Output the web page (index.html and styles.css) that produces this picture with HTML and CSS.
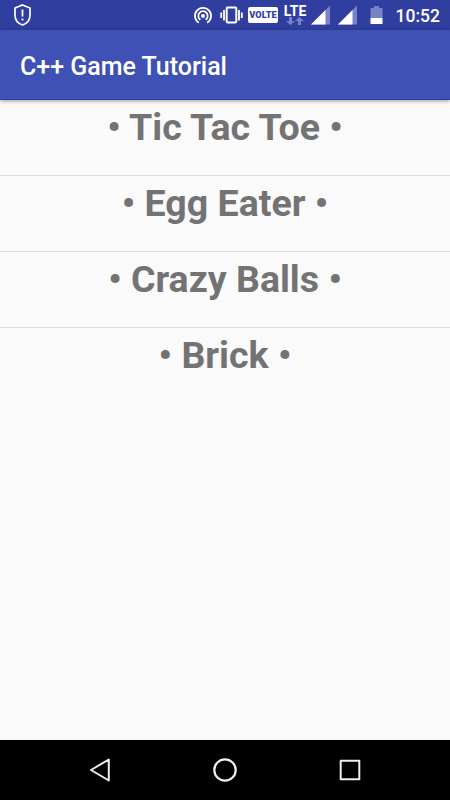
FILE: index.html
```html
<!DOCTYPE html>
<html lang="en">
<head>
<meta charset="utf-8">
<title>C++ Game Tutorial</title>
<link rel="stylesheet" href="styles.css">
</head>
<body>
<div class="screen">
  <div class="status-bar">
    <svg class="shield" width="18" height="30" viewBox="0 0 18 30" fill="none" stroke="#fff" stroke-width="1.7"><path d="M8.500 5L16 8V15C16 19.500 13 23.500 8.500 25C4 23.500 1 19.500 1 15V8Z"/><path d="M8.500 9.500V16.500M8.500 18.500V20.500" stroke-width="1.800"/></svg>
    <div class="indicators">
      <svg width="20" height="30" viewBox="0 0 20 30" fill="none" stroke="#fff" stroke-width="1.800"><path d="M5.800 22.700A8 8 0 1 1 14.200 22.700"/><path d="M7.400 19.800A4.700 4.700 0 1 1 12.600 19.800"/><circle cx="10" cy="16" r="2" fill="#fff" stroke="none"/></svg>
      <svg class="vibrate" width="24" height="30" viewBox="0 0 24 30" fill="none" stroke="#fff"><rect x="6.700" y="7.400" width="9.600" height="15" rx=".8" stroke-width="2"/><path d="M4 10V20.500M19 10V20.500M1.200 12.500V18M21.800 12.500V18" stroke-width="1.800"/></svg>
      <span class="volte">VOLTE</span>
      <div class="network">
        <span class="lte">LTE</span>
        <svg width="18" height="8" viewBox="0 0 18 8" fill="#7982c4"><path d="M3 0H6V4H9L4.500 8L0 4H3Z"/><path d="M12 8H15V4H18L13.500 0L9 4H12Z"/></svg>
      </div>
      <svg class="signal" width="19" height="30" viewBox="0 0 19 30"><path d="M0 24.500L19 5.500V24.500Z" fill="#7982c4"/><path d="M0 24.500L14.500 10V24.500Z" fill="#fff"/></svg>
      <svg class="signal second" width="19" height="30" viewBox="0 0 19 30"><path d="M0 24.500L19 5.500V24.500Z" fill="#7982c4"/><path d="M0 24.500L14.500 10V24.500Z" fill="#fff"/></svg>
      <svg class="battery" width="13" height="30" viewBox="0 0 13 30"><path d="M0.500 18V8H4V6H9V8H12.500V18Z" fill="#7982c4"/><path d="M.5 18H12.500V24H.5Z" fill="#fff"/></svg>
      <span class="clock">10:52</span>
    </div>
  </div>
  <header class="app-bar"><h1>C++ Game Tutorial</h1></header>
  <ul class="games">
    <li>• Tic Tac Toe •</li>
    <li>• Egg Eater •</li>
    <li>• Crazy Balls •</li>
    <li>• Brick •</li>
  </ul>
  <nav class="nav-bar">
    <svg width="26" height="26" viewBox="0 0 26 26" fill="none" stroke="#eee" stroke-width="2" stroke-linejoin="round"><path d="M21.800 2.500V23.500L4 13Z"/></svg>
    <svg width="26" height="26" viewBox="0 0 26 26" fill="none" stroke="#eee" stroke-width="2.200"><circle cx="13" cy="13" r="10.700"/></svg>
    <svg width="26" height="26" viewBox="0 0 26 26" fill="none" stroke="#eee" stroke-width="2" stroke-linejoin="round"><rect x="3.700" y="3.700" width="18.600" height="18.600"/></svg>
  </nav>
</div>
</body>
</html>
```
FILE: styles.css
```css
body {
  margin: 0;
  font-family: Roboto, "Liberation Sans", sans-serif;
}

.screen {
  display: flex;
  flex-direction: column;
  width: 450px;
  height: 800px;
  overflow: hidden;
  background: #fafafa;
}

.status-bar {
  display: flex;
  justify-content: space-between;
  box-sizing: border-box;
  height: 30px;
  padding: 0 10px 0 14px;
  background: #303f9f;
  color: #fff;
}

.status-bar svg {
  display: block;
  flex: none;
}

.indicators {
  display: flex;
  align-items: center;
}

.vibrate {
  margin-left: 7px;
}

.volte {
  width: 30px;
  height: 16px;
  margin-left: 4px;
  border-radius: 2px;
  background: #fff;
  color: #303f9f;
  font-size: 9.2px;
  font-weight: 900;
  line-height: 16px;
  text-align: center;
}

.network {
  display: flex;
  flex-direction: column;
  align-items: center;
  width: 24px;
  height: 20px;
  margin-left: 5px;
}

.lte {
  height: 12px;
  font-size: 14px;
  font-weight: 700;
  line-height: 12px;
}

.signal {
  margin-left: 4px;
}

.second {
  margin-left: 8px;
}

.battery {
  margin-left: 13px;
}

.clock {
  width: 45px;
  margin-left: 12px;
  font-size: 17.5px;
  font-weight: 500;
  line-height: 30px;
  padding-top: 2px;
  text-align: right;
}

.app-bar {
  position: relative;
  display: flex;
  align-items: center;
  box-sizing: border-box;
  height: 70px;
  padding: 3px 20px 0;
  border-bottom: 1px solid #2c3eae;
  background: #3f51b5;
  box-shadow: 0 1px 4px rgba(0, 0, 0, 0.4);
  color: #fff;
}

.app-bar h1 {
  margin: 0;
  font-size: 25px;
  font-weight: 500;
}

.games {
  flex: 1;
  margin: 0;
  padding: 0;
  list-style: none;
  color: #737373;
  font-size: 37.5px;
  font-weight: 700;
  line-height: 54px;
  text-align: center;
}

.games li {
  box-sizing: border-box;
  height: 76px;
  border-bottom: 1px solid #dadada;
}

.games li:last-child {
  border-bottom: 0;
}

.nav-bar {
  display: flex;
  align-items: center;
  justify-content: space-between;
  box-sizing: border-box;
  height: 60px;
  padding: 0 87px;
  background: #000;
}
```
